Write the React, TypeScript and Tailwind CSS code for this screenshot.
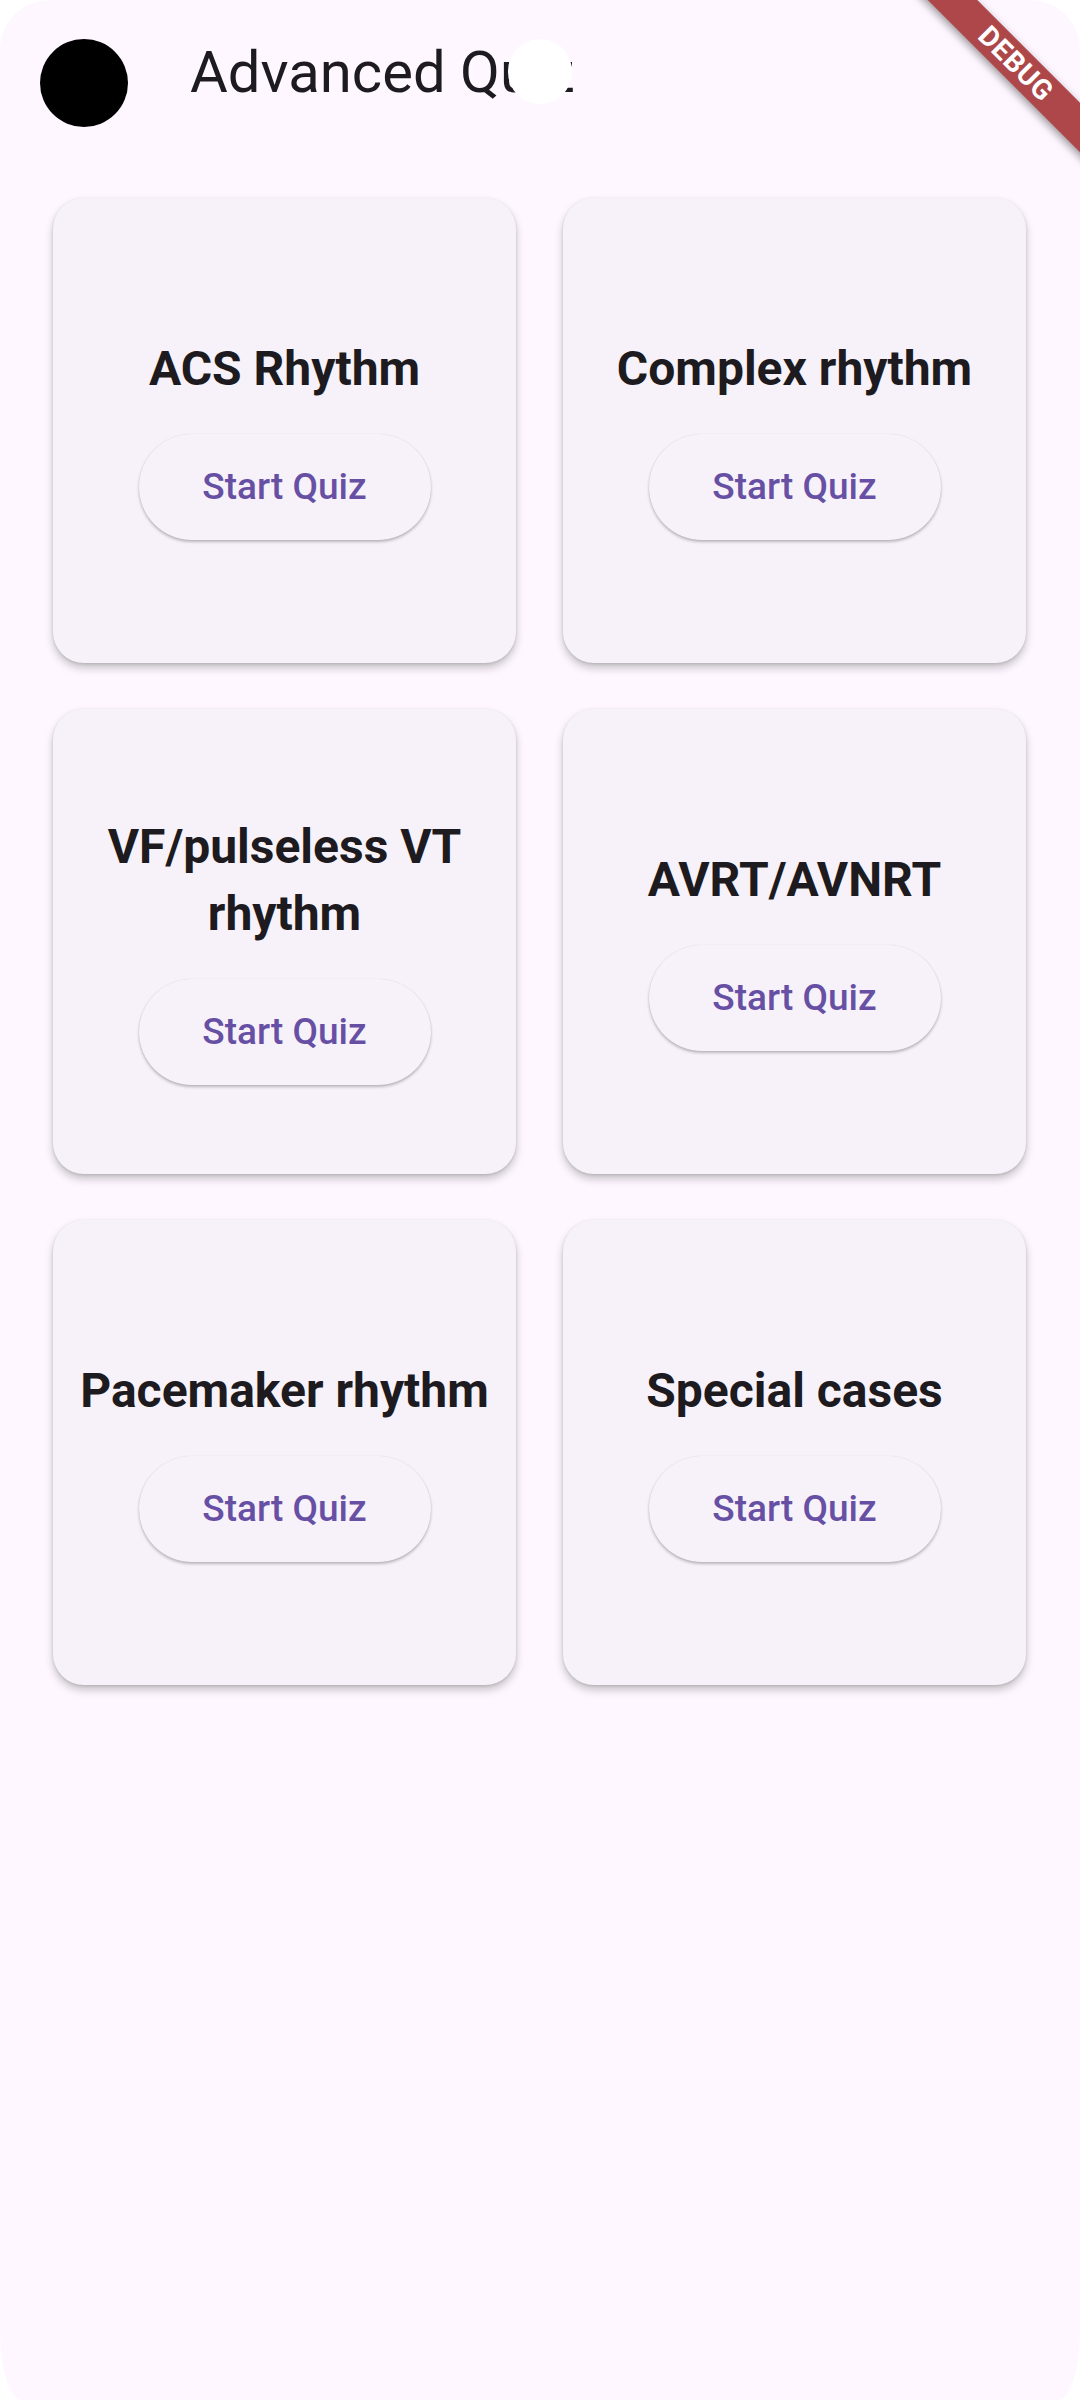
const QUIZZES = [
  "ACS Rhythm",
  "Complex rhythm",
  "VF/pulseless VT rhythm",
  "AVRT/AVNRT",
  "Pacemaker rhythm",
  "Special cases",
];

function QuizCard({ title }: { title: string }) {
  return (
    <div className="flex h-[465px] flex-col items-center justify-center rounded-[31px] bg-[#F7F2FA] px-6 pt-[14px] shadow-[0_5px_9px_rgba(0,0,0,0.22),0_1px_3px_rgba(0,0,0,0.12)]">
      <h2 className="text-center text-[48px] font-bold leading-[67px] text-[#1D1B20]">
        {title}
      </h2>
      <button className="mt-[32px] h-[106px] w-[292px] rounded-full bg-[#F7F2FA] text-[37px] font-medium text-[#6750A4] shadow-[0_2px_3px_rgba(0,0,0,0.25),0_0_1px_rgba(0,0,0,0.12)]">
        Start Quiz
      </button>
    </div>
  );
}

export default function App() {
  return (
    <div className="h-[2400px] w-[1080px] bg-white font-['Roboto',sans-serif]">
      <div className="relative h-full w-full overflow-hidden rounded-t-[50px] rounded-bl-[22px_70px] rounded-br-[22px_70px] bg-[#FEF7FF]">
        <header className="relative flex h-[168px] items-start">
          <div className="ml-[40px] mt-[39px] h-[88px] w-[88px] rounded-full bg-black" />
          <h1 className="ml-[62px] mt-[38px] text-[58px] font-normal leading-[68px] text-[#1D1B20]">
            Advanced Quiz
          </h1>
          <div className="absolute left-[508px] top-[39px] h-[65px] w-[64px] rounded-full bg-white" />
        </header>

        <main className="grid grid-cols-2 gap-x-[47px] gap-y-[46px] pl-[53px] pr-[54px] pt-[30px]">
          {QUIZZES.map((q) => (
            <QuizCard key={q} title={q} />
          ))}
        </main>

        {/* debug ribbon */}
        <div className="absolute left-[866px] top-[46px] flex h-[35px] w-[300px] rotate-45 items-center justify-center bg-[#AD474A] shadow-[0_3px_8px_rgba(0,0,0,0.4)]">
          <span className="text-[28px] font-bold leading-none tracking-wide text-white">
            DEBUG
          </span>
        </div>
      </div>
    </div>
  );
}
